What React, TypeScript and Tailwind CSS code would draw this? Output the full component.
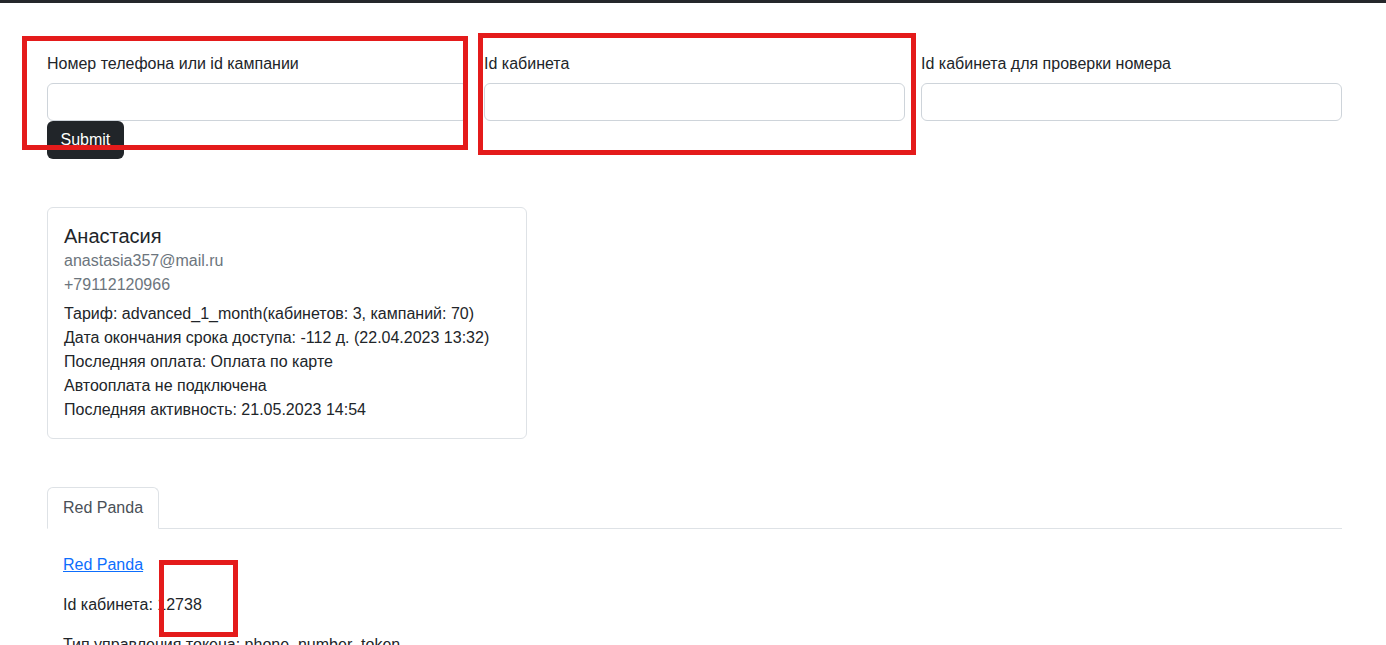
import React from 'react';

const font = { fontFamily: '"Liberation Sans", Arial, sans-serif' };

function Field({ label, children }: { label: string; children?: React.ReactNode }) {
  return (
    <div className="flex flex-col">
      <label className="mb-[7px] text-base leading-6 text-[#212529]">{label}</label>
      <input className="h-[38px] w-full rounded-md border border-[#ced4da] bg-white px-3 outline-none" />
      {children}
    </div>
  );
}

export default function App() {
  return (
    <div className="relative min-h-screen bg-white text-[#212529]" style={font}>
      <div className="h-[3px] bg-[#25272b]" />

      <div className="pl-[47px] pr-[44px] pt-[49px]">
        {/* search form */}
        <div className="grid grid-cols-3 gap-4">
          <Field label="Номер телефона или id кампании">
            <div>
              <button className="h-[38px] rounded-md bg-[#212529] px-[13.5px] text-base text-white">Submit</button>
            </div>
          </Field>
          <Field label="Id кабинета" />
          <Field label="Id кабинета для проверки номера" />
        </div>

        {/* user card */}
        <div className="mt-[48px] w-[480px] rounded-md border border-[#dee2e6] p-4">
          <h5 className="text-xl font-medium leading-6">Анастасия</h5>
          <div className="mt-px text-base leading-6 text-[#6c757d]">anastasia357@mail.ru</div>
          <div className="text-base leading-[23px] text-[#6c757d]">+79112120966</div>
          <div className="mt-[6px] text-base leading-6">
            <div>Тариф: advanced_1_month(кабинетов: 3, кампаний: 70)</div>
            <div>Дата окончания срока доступа: -112 д. (22.04.2023 13:32)</div>
            <div>Последняя оплата: Оплата по карте</div>
            <div>Автооплата не подключена</div>
            <div>Последняя активность: 21.05.2023 14:54</div>
          </div>
        </div>

        {/* cabinets tabs */}
        <div className="mt-[48px] flex border-b border-[#dee2e6]">
          <div className="-mb-px rounded-t-md border border-[#dee2e6] border-b-white bg-white px-[15px] py-2 text-base leading-6 text-[#495057]">
            Red Panda
          </div>
        </div>
        <div className="px-4 pt-6 text-base leading-6">
          <a href="#" className="text-[#0d6efd] underline">Red Panda</a>
          <p className="mt-4">Id кабинета: 12738</p>
          <p className="mt-4">Тип управления токена: phone_number_token</p>
        </div>
      </div>

      {/* annotation frames */}
      <div className="pointer-events-none absolute left-[22px] top-[36px] h-[114px] w-[446px] border-[5px] border-[#e41b1b]" />
      <div className="pointer-events-none absolute left-[478px] top-[33px] h-[122px] w-[438px] border-[5px] border-[#e41b1b]" />
      <div className="pointer-events-none absolute left-[159px] top-[560px] h-[77px] w-[79px] border-[5px] border-[#e41b1b]" />
    </div>
  );
}
